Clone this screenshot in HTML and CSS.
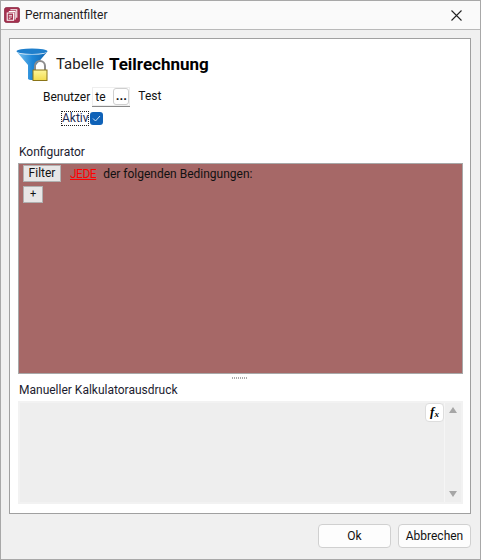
FILE: index.html
```html
<!DOCTYPE html>
<html lang="de">
<head>
<meta charset="utf-8">
<title>Permanentfilter</title>
<link rel="stylesheet" href="styles.css">
</head>
<body>
<div class="window">
  <header class="titlebar">
    <svg class="appicon" width="16" height="16" viewBox="0 0 20 20">
      <rect x="0.5" y="0.5" width="19" height="19" rx="3" fill="#a5304f" stroke="#8a2a42"/>
      <path d="M8 3.500h8v10M6 5.500h8v10M4 7.500h8v9h-8z" fill="none" stroke="#fff" stroke-width="1.300"/>
      <path d="M6 10.500h4M6 12.500h4M6 14.500h2" stroke="#fff" stroke-width="1"/>
    </svg>
    <span class="title">Permanentfilter</span>
    <svg class="close" width="11" height="11" viewBox="0 0 11 11"><path d="M.5.5l10 10M10.500.5l-10 10" stroke="#222" stroke-width="1.100" fill="none"/></svg>
  </header>
  <main class="client">
    <section class="panel">
      <div class="heading">
        <svg class="funnel" width="33" height="33" viewBox="0 0 33 33">
          <defs>
            <linearGradient id="fg" x1="0" x2="1" y1="0" y2="0"><stop offset="0" stop-color="#7ec4f0"/><stop offset=".5" stop-color="#1f88d8"/><stop offset="1" stop-color="#0f64b0"/></linearGradient>
            <linearGradient id="lk" x1="0" x2="0" y1="0" y2="1"><stop offset="0" stop-color="#fdf59a"/><stop offset="1" stop-color="#f3dc4e"/></linearGradient>
          </defs>
          <ellipse cx="16" cy="3.200" rx="15.500" ry="2.800" fill="#1f7fcc"/>
          <path d="M.5 3.500C3 6 5 6.500 16 6.500S29 6 31.500 3.500L20 17v14q-1 1-3 1h-2q-2 0-3-1V17z" fill="url(#fg)"/>
          <path d="M19 22v-4a5 5 0 0 1 10 0v4" fill="none" stroke="#8c8c8c" stroke-width="2"/>
          <rect x="17" y="22" width="14" height="10.500" fill="url(#lk)" stroke="#8a7418"/>
        </svg>
        <span class="tabelle">Tabelle</span>
        <strong class="tname">Teilrechnung</strong>
      </div>
      <div class="userrow">
        <span>Benutzer</span>
        <div class="combo"><span class="cval">te</span><span class="dots">...</span></div>
        <span class="test">Test</span>
      </div>
      <div class="activerow">
        <span class="focus">Aktiv</span>
        <span class="check"><svg width="9" height="7" viewBox="0 0 9 7"><path d="M1 3.500l2.500 2.500L8 1" fill="none" stroke="#cfe4f7" stroke-width="1"/></svg></span>
      </div>
      <div class="label konf">Konfigurator</div>
      <div class="config">
        <div class="frow">
          <span class="fbtn">Filter</span>
          <a class="jede">JEDE</a>
          <span class="ftext">der folgenden Bedingungen:</span>
        </div>
        <span class="plus">+</span>
      </div>
      <div class="grip"></div>
      <div class="label manual">Manueller Kalkulatorausdruck</div>
      <div class="editor">
        <div class="edit">
          <span class="fx">f<sub>x</sub></span>
        </div>
        <div class="scroll">
          <span class="arrow up"></span>
          <span class="arrow down"></span>
        </div>
      </div>
    </section>
    <footer class="buttons">
      <span class="btn">Ok</span>
      <span class="btn">Abbrechen</span>
    </footer>
  </main>
</div>
</body>
</html>
```

FILE: styles.css
```css
* { box-sizing: border-box; }
html, body { margin: 0; padding: 0; }
body { width: 481px; height: 560px; font: 12px Roboto, "Noto Sans", sans-serif; color: #111; overflow: hidden; }
.window { width: 481px; height: 560px; border: 1px solid #a8a8a8; display: flex; flex-direction: column; background: #f0f0f0; }
.titlebar { height: 29px; flex: none; display: flex; align-items: center; padding: 0 18px 0 3px; background: #fafafa; border-bottom: 1px solid #b9b9b9; }
.appicon { margin-right: 5px; }
.title { flex: 1; font-size: 12px; color: #222; }
.client { flex: 1; display: flex; flex-direction: column; padding: 8px 8px 0; }
.panel { height: 476px; width: 462px; background: #fff; border: 1px solid #a0a0a0; padding: 9px 7px 0 8px; display: flex; flex-direction: column; }
.heading { height: 33px; display: flex; align-items: center; margin-left: -2px; }
.funnel { margin-right: 7px; flex: none; }
.tabelle { font-size: 15px; margin-right: 5px; color: #222; position: relative; top: -1px; }
.tname { font-size: 17px; font-weight: 700; color: #000; position: relative; top: -1px; }
.userrow { margin: 6px 0 0 25px; height: 20px; display: flex; align-items: center; }
.combo { width: 38px; height: 20px; margin-left: 2px; display: flex; align-items: center; justify-content: space-between; border-bottom: 1px solid #8a8a8a; box-shadow: 0 0 0 1px #eee inset; padding: 0 1px 0 3px; }
.dots { width: 16px; height: 17px; border: 1px solid #cfcfcf; border-radius: 3px; background: #fff; font-size: 13px; font-weight: 700; line-height: 13px; text-align: center; }
.test { margin-left: 8px; position: relative; top: -1px; }
.activerow { margin: 3px 0 0 43px; height: 16px; display: flex; align-items: center; }
.focus { outline: 1px dotted #222; outline-offset: -1px; width: 28px; height: 15px; line-height: 15px; padding: 0 1px; color: #1c2a52; white-space: nowrap; }
.check { width: 13px; height: 13px; margin-left: 1px; border-radius: 3px; background: #0f62b8; display: flex; align-items: center; justify-content: center; }
.label { height: 18px; line-height: 18px; color: #1c1c30; padding-left: 1px; }
.konf { margin-top: 17px; }
.config { height: 211px; margin-top: 2px; background: #a66867; border: 1px solid #a8a8a8; padding: 1px 4px; }
.frow { display: flex; align-items: center; height: 17px; }
.fbtn { width: 38px; height: 17px; background: #e8e6e6; border: 1px solid #b0b0b0; text-align: center; line-height: 14px; }
.jede { margin-left: 9px; color: #ff0000; text-decoration: underline; letter-spacing: -.5px; }
.ftext { margin-left: 7px; color: #111; }
.plus { display: block; margin-top: 4px; width: 20px; height: 17px; background: #e8e6e6; border: 1px solid #b0b0b0; text-align: center; line-height: 14px; font-size: 11px; }
.grip { height: 2px; width: 16px; margin: 3px 0 0 214px; background-image: repeating-linear-gradient(90deg, #aaa 0 1px, transparent 1px 2px); }
.manual { margin-top: 2px; }
.editor { height: 103px; margin-top: 2px; display: flex; border: 2px solid #f2f2f2; background: #eeeeee; }
.edit { flex: 1; display: flex; justify-content: flex-end; padding: 0; }
.fx { width: 19px; height: 19px; background: #fff; border: 1px solid #ddd; border-radius: 4px; font: italic 700 13px "Liberation Serif", serif; text-align: center; line-height: 15px; color: #000; }
.fx sub { font-size: 9px; vertical-align: -1px; line-height: 0; }
.scroll { width: 17px; flex: none; display: flex; flex-direction: column; justify-content: space-between; align-items: center; padding: 4px 0 5px; border-left: 1px solid #f5f5f5; }
.arrow { width: 0; height: 0; border-left: 4.500px solid transparent; border-right: 4.500px solid transparent; }
.up { border-bottom: 6px solid #a6a6a6; }
.down { border-top: 6px solid #a6a6a6; }
.buttons { flex: 1; display: flex; justify-content: flex-end; gap: 7px; padding: 10px 1px 0 0; }
.btn { width: 73px; height: 24px; background: #fdfdfd; border: 1px solid #d0d0d0; border-radius: 4px; text-align: center; line-height: 22px; color: #111; }
```
